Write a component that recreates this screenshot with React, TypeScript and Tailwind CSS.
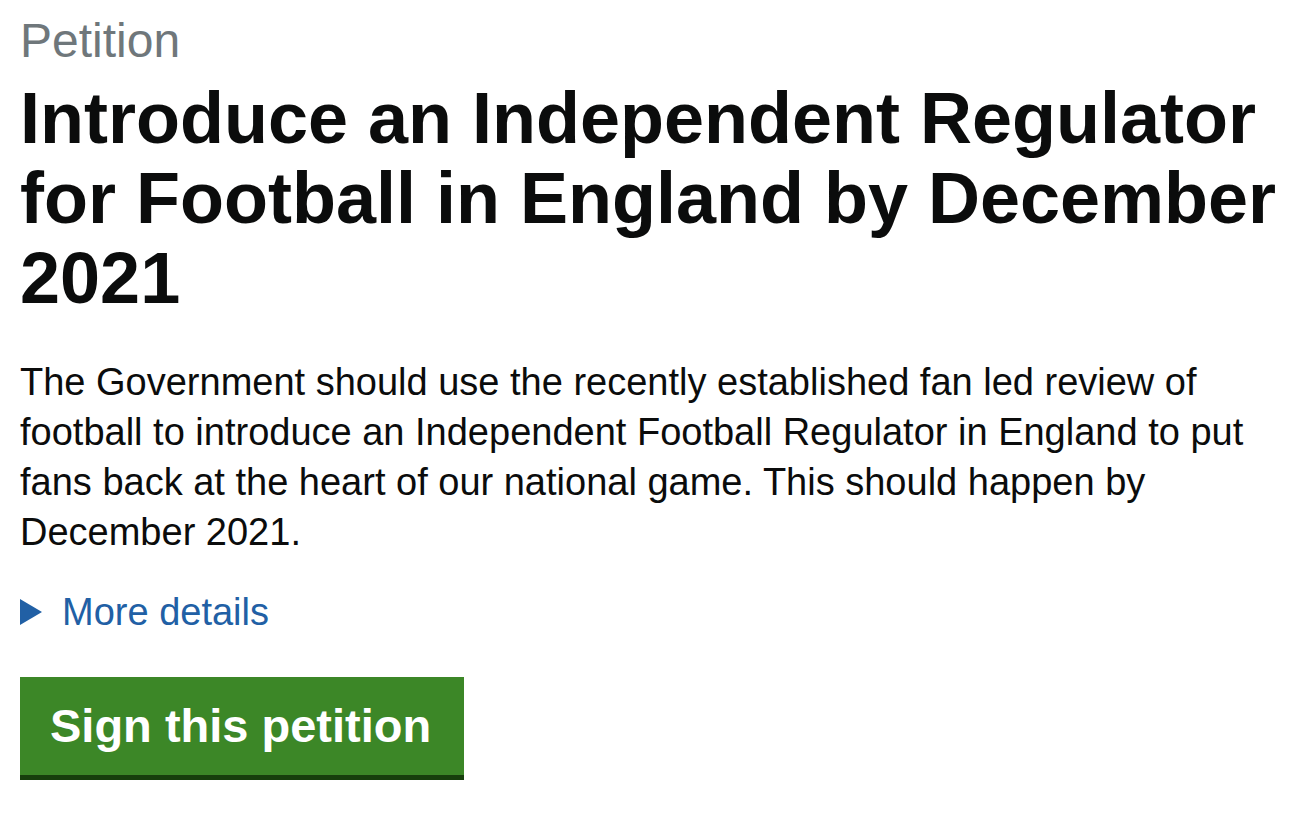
const App = () => {
  return (
    <div className="min-h-screen bg-white px-[20px] pt-[12px] font-['Liberation_Sans',Arial,sans-serif] text-[#0b0c0c]">
      <p className="text-[48px] leading-[58px] text-[#6f777b]">Petition</p>
      <h1 className="mt-[8px] text-[72px] font-bold leading-[80px]">
        Introduce an Independent Regulator for Football in England by December 2021
      </h1>
      <p className="mt-[39px] max-w-[1266px] text-[38px] leading-[50px]">
        The Government should use the recently established fan led review of football to introduce an
        Independent Football Regulator in England to put fans back at the heart of our national game.
        This should happen by December 2021.
      </p>
      <div className="mt-[30px] flex items-center gap-[20px] text-[38px] leading-[50px] text-[#2160a5]">
        <svg width="22" height="28" viewBox="0 0 22 28" className="shrink-0">
          <polygon points="0,1 22,14 0,27" fill="#2160a5" />
        </svg>
        <span>More details</span>
      </div>
      <button className="mt-[40px] block border-b-[5px] border-[#173f0c] bg-[#3c8727] pl-[30px] pr-[33px] pb-[20px] pt-[20px] text-[47px] font-bold leading-[58px] text-white">
        Sign this petition
      </button>
    </div>
  );
};

export default App;
